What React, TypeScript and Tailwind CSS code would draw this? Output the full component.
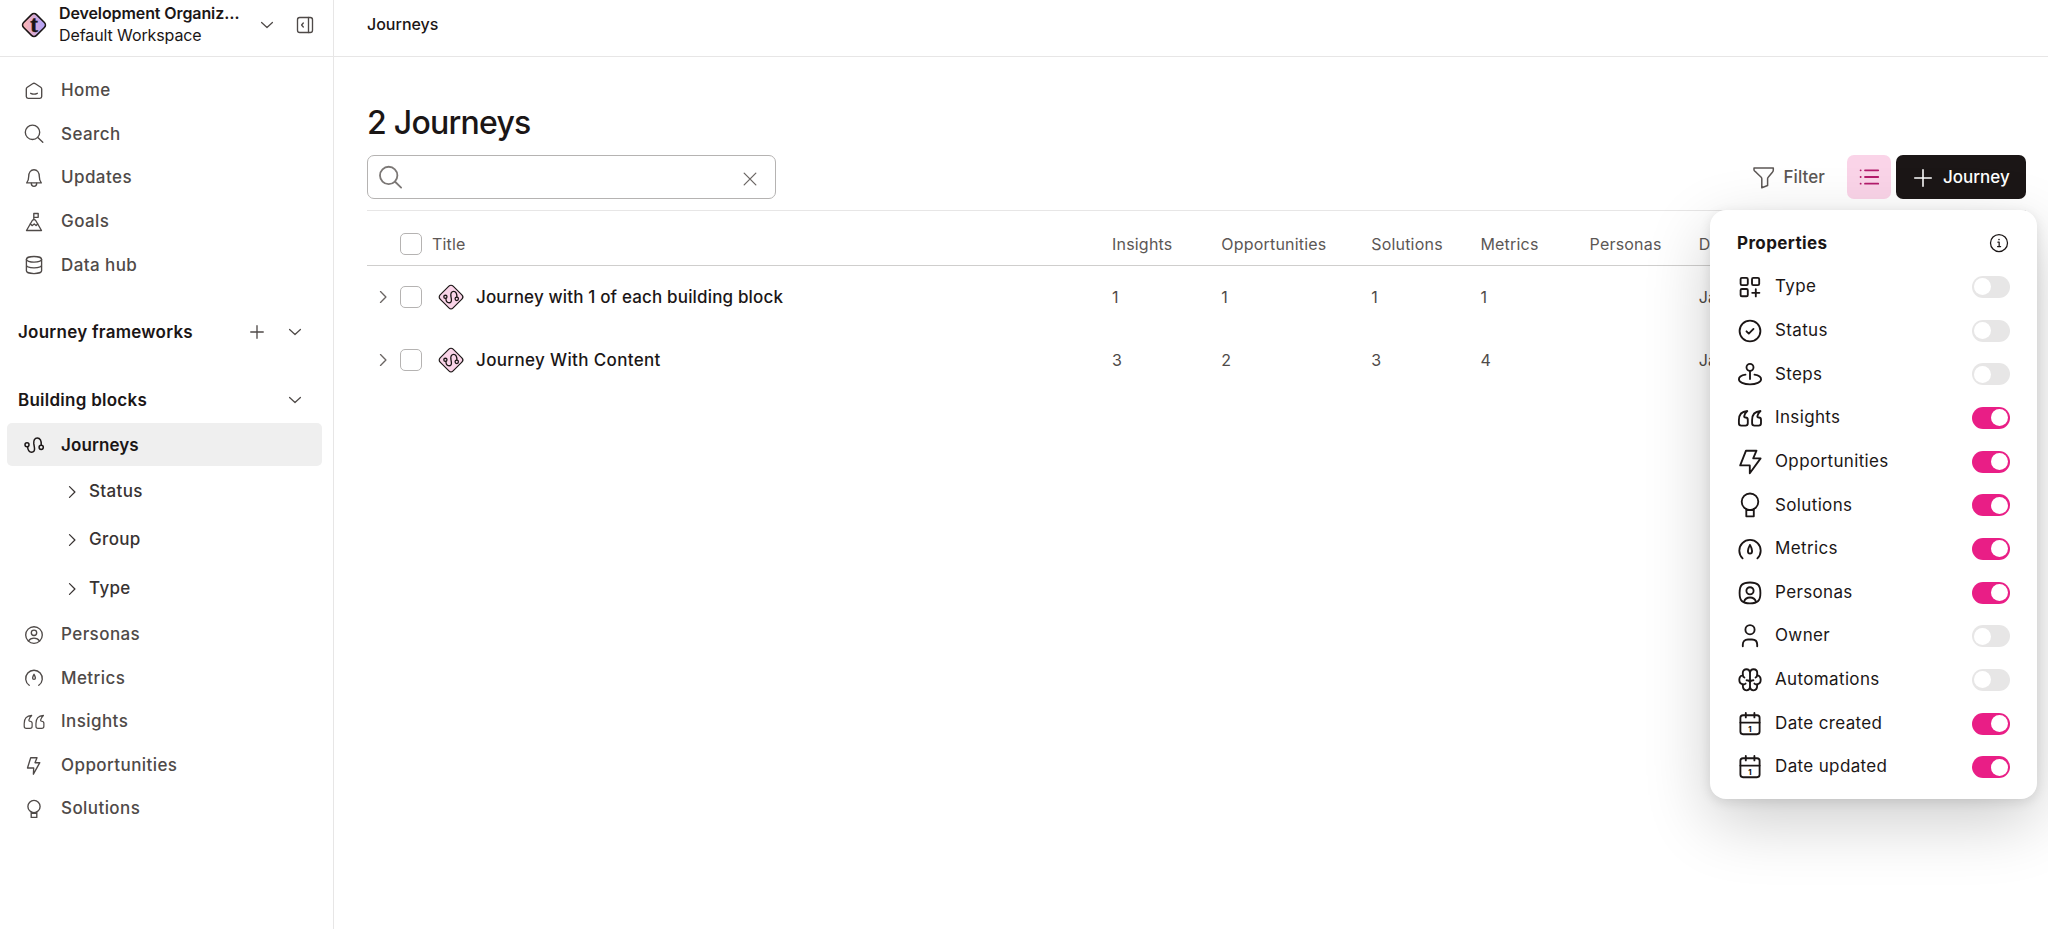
import type { ReactNode } from 'react'
import clsx from 'clsx'

interface IconProps {
  children: ReactNode
  className?: string
  stroke?: number
}

function Icon({ children, className = 'w-6 h-6', stroke = 1.35 }: IconProps) {
  return (
    <svg
      className={clsx('shrink-0 overflow-visible', className)}
      viewBox="0 0 24 24"
      fill="none"
      stroke="currentColor"
      strokeWidth={stroke}
      strokeLinecap="round"
      strokeLinejoin="round"
    >
      {children}
    </svg>
  )
}

const journeyShape = (
  <>
    <circle cx="5" cy="11.8" r="2" />
    <circle cx="19.2" cy="14.3" r="2.1" />
    <path d="M5.6 13.8c.2 3.3 1.8 5.4 4 5.4 2.3 0 3.2-1.6 2.9-4.2l-.7-4.3c-.4-3.4.9-5.8 3.5-5.8 2.7 0 4.3 2.6 4 7.3" />
  </>
)

const quoteShape = (
  <>
    <path d="M9.3 5C4 5.4.9 8.9.9 14v3.2c0 1.5 1 2.4 2.4 2.4h4.1c1.4 0 2.4-.9 2.4-2.4v-3.3c0-1.5-.9-2.4-2.3-2.4-1 0-1.5-.5-1.3-1.4.4-1.9 1.4-3.6 3.1-5.1z" />
    <path d="M22.5 5c-5.3.4-8.4 3.9-8.4 9v3.2c0 1.5 1 2.4 2.4 2.4h4.1c1.4 0 2.4-.9 2.4-2.4v-3.3c0-1.5-.9-2.4-2.3-2.4-1 0-1.5-.5-1.3-1.4.4-1.9 1.4-3.6 3.1-5.1z" />
  </>
)

const searchShape = (
  <>
    <circle cx="10.5" cy="10.3" r="7.2" />
    <path d="M15.8 15.5l5 4.8" />
  </>
)

const plusShape = <path d="M12 4.5v15M4.5 12h15" />
const chevronDown = <path d="M5.5 9l6.5 6 6.5-6" />
const chevronRight = <path d="M9 5.5l6.5 6.5L9 18.5" />

const calendarShape = (
  <>
    <rect x="2.4" y="3.2" width="19.2" height="19" rx="2.6" />
    <path d="M2.4 10.6h19.2M7.8 1v4.4M16.4 1v4.4" />
    <text x="12" y="19.6" textAnchor="middle" fontSize="7.5" fontWeight="800" fill="currentColor" stroke="none">
      1
    </text>
  </>
)

const mainNav = [
  {
    label: 'Home',
    shape: (
      <>
        <path d="M4.3 10.1c0-.8.4-1.5 1-1.9l5.3-3.5c.9-.6 1.9-.6 2.8 0l5.3 3.5c.6.4 1 1.1 1 1.9v7.5c0 1-.8 1.8-1.8 1.8H6.1c-1 0-1.8-.8-1.8-1.8z" />
        <path d="M8.7 14.3c1.9.9 4.7.9 6.6 0" />
      </>
    ),
  },
  { label: 'Search', shape: searchShape },
  {
    label: 'Updates',
    shape: (
      <>
        <path d="M4.7 16.9c1.5-1.9 2-3.5 2-6.4C6.7 6.6 8.8 3.7 12 3.7s5.3 2.9 5.3 6.8c0 2.9.5 4.5 2 6.4z" />
        <path d="M9.3 17.2c0 1.9 1 3.1 2.7 3.1s2.7-1.2 2.7-3.1" />
      </>
    ),
  },
  {
    label: 'Goals',
    shape: (
      <>
        <path d="M4.5 20.5l5.8-10c.7-1.2 2.7-1.2 3.4 0l5.8 10z" />
        <path d="M8.3 14l2 1.6 1.9-1.6 1.9 1.6 1.6-1.6M11.8 9.5v-6h4.4v3.8h-4.4" />
      </>
    ),
  },
  {
    label: 'Data hub',
    shape: (
      <>
        <ellipse cx="12" cy="6.3" rx="7.6" ry="2.8" />
        <path d="M4.4 6.3v11.4c0 1.6 3.4 2.9 7.6 2.9s7.6-1.3 7.6-2.9V6.3M4.4 12c0 1.6 3.4 2.8 7.6 2.8s7.6-1.2 7.6-2.8" />
      </>
    ),
  },
]

const blockNav = [
  {
    label: 'Personas',
    shape: (
      <>
        <circle cx="12" cy="12" r="8.3" />
        <circle cx="12" cy="9.8" r="2.7" />
        <path d="M6.5 18c1.1-1.9 3.1-2.9 5.5-2.9s4.4 1 5.5 2.9" />
      </>
    ),
  },
  {
    label: 'Metrics',
    shape: (
      <>
        <path d="M7.2 19.3a8.3 8.3 0 1 1 9.6 0" />
        <path d="M12 8.3c-.9 1.5-1.4 2.7-1.4 3.6a1.4 1.4 0 0 0 2.8 0c0-.9-.5-2.1-1.4-3.6z" />
      </>
    ),
  },
  { label: 'Insights', shape: <g transform="translate(1.4 1) scale(.89)">{quoteShape}</g> },
  {
    label: 'Opportunities',
    shape: <path d="M8.7 3.7H15l-2 5h4.8l-6.4 11.5.3-6.2H5.5z" />,
  },
  {
    label: 'Solutions',
    shape: (
      <>
        <circle cx="12" cy="9.5" r="6.1" />
        <path d="M9.2 15v5.4h5.6V15M9.2 16.2h5.6" />
      </>
    ),
  },
]

const properties = [
  {
    label: 'Type',
    on: false,
    shape: (
      <>
        <rect x="2.6" y="2.9" width="7.2" height="7.2" rx="1.3" />
        <rect x="14" y="2.9" width="7.2" height="7.2" rx="1.3" />
        <rect x="2.6" y="14" width="7.2" height="7.2" rx="1.3" />
        <path d="M17.8 14.2v7.2M14.2 17.8h7.2" />
      </>
    ),
  },
  {
    label: 'Status',
    on: false,
    shape: (
      <>
        <circle cx="12" cy="12" r="10.4" />
        <path d="M8.5 12.3l2.3 2.3 4.7-4.7" />
      </>
    ),
  },
  {
    label: 'Steps',
    on: false,
    shape: (
      <>
        <circle cx="12" cy="5.3" r="3.5" />
        <path d="M12 8.8v8.3M7.5 12.7C3.4 13.4.9 15.1.9 17.3c0 2.9 4.9 5.1 11.1 5.1s11.1-2.2 11.1-5.1c0-2.2-2.5-3.9-6.6-4.6" />
      </>
    ),
  },
  { label: 'Insights', on: true, shape: quoteShape },
  {
    label: 'Opportunities',
    on: true,
    shape: <path d="M8 .7h10.5l-3.3 7.7h7.4L11.8 23.3v-7.9H2.2z" />,
  },
  {
    label: 'Solutions',
    on: true,
    shape: (
      <>
        <circle cx="12" cy="8.8" r="8.3" />
        <path d="M8.3 16.2v7.1h7.5v-7.1M8.3 17h7.5" />
      </>
    ),
  },
  {
    label: 'Metrics',
    on: true,
    shape: (
      <>
        <path d="M4.6 21.3a10.7 10.7 0 1 1 14.8 0" />
        <path d="M12 7.9c-1.4 2.5-2.1 4.5-2.1 6.1a2.1 2.6 0 0 0 4.2 0c0-1.6-.7-3.6-2.1-6.1z" />
      </>
    ),
  },
  {
    label: 'Personas',
    on: true,
    shape: (
      <>
        <path d="M12 1.5c7.8 0 10.4 2.6 10.4 10.4S19.8 22.3 12 22.3 1.6 19.7 1.6 11.9 4.2 1.5 12 1.5z" />
        <circle cx="12" cy="9.8" r="3.6" />
        <path d="M6 20.8c.8-2.7 3-4.3 6-4.3s5.2 1.6 6 4.3" />
      </>
    ),
  },
  {
    label: 'Owner',
    on: false,
    shape: (
      <>
        <circle cx="12" cy="5.7" r="4.6" />
        <path d="M4.8 22.3v-1.5c0-3.4 1.9-5.3 5.2-5.3h4c3.3 0 5.2 1.9 5.2 5.3v1.5" />
      </>
    ),
  },
  {
    label: 'Automations',
    on: false,
    shape: (
      <>
        <path d="M12 4.3v15.5M12 4.3c-.4-2.1-1.7-3.1-3.5-3.1-2.2 0-3.7 1.5-3.7 3.6v2.3c-2.2.6-3.5 2.4-3.5 4.7s1.3 4.1 3.5 4.6v.9c0 3 1.3 5 3.6 5 2 0 3.3-1 3.6-2.9" />
        <path d="M12 4.3c.4-2.1 1.7-3.1 3.5-3.1 2.2 0 3.7 1.5 3.7 3.6v2.3c2.2.6 3.5 2.4 3.5 4.7s-1.3 4.1-3.5 4.6v.9c0 3-1.3 5-3.6 5-2 0-3.3-1-3.6-2.9" />
        <path d="M4.8 7.1c.1 1.1.6 1.9 1.6 2.4M19.2 7.1c-.1 1.1-.6 1.9-1.6 2.4M4.8 16.4c1.1.2 2.1-.1 2.8-.8M19.2 16.4c-1.1.2-2.1-.1-2.8-.8M8.6 12.2c1.6 0 2.8.6 3.4 1.9.6-1.3 1.8-1.9 3.4-1.9" />
      </>
    ),
  },
  { label: 'Date created', on: true, shape: calendarShape },
  { label: 'Date updated', on: true, shape: calendarShape },
]

const columns = ['Insights', 'Opportunities', 'Solutions', 'Metrics', 'Personas', 'Date created']

const journeys = [
  { title: 'Journey with 1 of each building block', tracking: 'tracking-[0.16px]', cells: ['1', '1', '1', '1', '', 'Jan 12'] },
  { title: 'Journey With Content', tracking: 'tracking-[0.35px]', cells: ['3', '2', '3', '4', '', 'Jan 12'] },
]

function NavItem({ label, shape }: { label: string; shape: ReactNode }) {
  return (
    <a className="flex items-center h-[43.67px] pl-[22px] gap-[15px] text-[17px] font-[450] tracking-[0.42px] text-[#4f4a48]">
      <Icon>{shape}</Icon>
      {label}
    </a>
  )
}

function Checkbox() {
  return <span className="w-[22px] h-[22px] shrink-0 rounded-[5px] border-[1.5px] border-[#b5b3b2] bg-white" />
}

function Toggle({ on }: { on: boolean }) {
  return (
    <span
      className={clsx(
        'flex items-center w-[38px] h-[22px] px-[2px] rounded-full',
        on ? 'justify-end bg-[#e91e86]' : 'justify-start bg-[#e7e6e6]',
      )}
    >
      <span className="w-[17px] h-[17px] rounded-full bg-white" />
    </span>
  )
}

function Sidebar() {
  return (
    <aside className="w-[334px] shrink-0 border-r border-[#e7e6e6]">
      <div className="flex items-center h-[57px] pl-5 pb-[7px] border-b border-[#e7e6e6]">
        <svg className="w-7 h-7 shrink-0" viewBox="0 0 28 28">
          <defs>
            <linearGradient id="brand" x1="0" y1="1" x2="1" y2="0">
              <stop offset="0.2" stopColor="#f7b3bb" />
              <stop offset="0.8" stopColor="#b9a5f3" />
            </linearGradient>
          </defs>
          <rect x="4.9" y="4.9" width="18.2" height="18.2" rx="3.5" transform="rotate(45 14 14)" fill="url(#brand)" stroke="#1b1616" strokeWidth="1.6" />
          <text x="14" y="20.8" textAnchor="middle" fontSize="23" fontWeight="700" fill="#1b1616" stroke="#1b1616" strokeWidth="0.5" fontFamily="Liberation Serif, serif">
            t
          </text>
        </svg>
        <div className="ml-[11px] w-[201px] whitespace-nowrap text-[16px] leading-[21.5px] text-[#1b1616]">
          <div className="font-semibold tracking-[-0.1px]">Development Organiz…</div>
          <div className="tracking-[-0.1px]">Default Workspace</div>
        </div>
        <Icon className="w-5 h-5 ml-[-3px] text-[#4f4a48]" stroke={1.5}>{chevronDown}</Icon>
        <Icon className="w-6 h-6 ml-4 text-[#4f4a48]">
          <rect x="4.5" y="4.5" width="15" height="15" rx="2.2" />
          <path d="M15.5 4.5v15M10.3 10l-1.7 2 1.7 2" />
        </Icon>
      </div>

      <nav className="pt-3">
        {mainNav.map((item) => (
          <NavItem key={item.label} {...item} />
        ))}
      </nav>

      <div className="flex items-center h-11 mt-[23px] pl-[18px] pr-7 text-[17px] font-semibold text-[#1b1616]">
        <span className="flex-1 tracking-[0.25px]">Journey frameworks</span>
        <Icon className="w-5 h-5 mr-[18px] text-[#4f4a48]" stroke={1.6}>{plusShape}</Icon>
        <Icon className="w-5 h-5 text-[#4f4a48]" stroke={1.5}>{chevronDown}</Icon>
      </div>
      <div className="flex items-center h-11 mt-6 pl-[18px] pr-7 text-[17px] font-semibold text-[#1b1616]">
        <span className="flex-1 tracking-[0.25px]">Building blocks</span>
        <Icon className="w-5 h-5 text-[#4f4a48]" stroke={1.5}>{chevronDown}</Icon>
      </div>

      <a className="flex items-center h-[43px] ml-[7px] mr-[11px] mt-px pt-px pl-[15px] gap-[15px] rounded-[5px] bg-[#efefef] text-[17px] font-semibold tracking-[0.1px] text-[#1b1616]">
        <Icon stroke={1.5}>{journeyShape}</Icon>
        Journeys
      </a>
      <div className="pt-px">
        {['Status', 'Group', 'Type'].map((label) => (
          <a key={label} className="flex items-center h-[48.5px] pl-[62px] gap-[7px] text-[17px] font-[450] tracking-[0.35px] text-[#383332]">
            <Icon className="w-5 h-5" stroke={1.5}>{chevronRight}</Icon>
            {label}
          </a>
        ))}
      </div>
      <nav>
        {blockNav.map((item) => (
          <NavItem key={item.label} {...item} />
        ))}
      </nav>
    </aside>
  )
}

function Toolbar() {
  return (
    <div className="flex items-center h-11">
      <div className="flex items-center justify-between w-[409px] h-11 pl-2 pr-[15px] rounded-[7px] border-[1.5px] border-[#b5b3b2]">
        <Icon className="w-[29px] h-[29px] text-[#7b7775]" stroke={1.5}>{searchShape}</Icon>
        <Icon className="w-5 h-5 mt-[3px] text-[#6a6563]" stroke={1.5}>
          <path d="M5 5l14 14M19 5L5 19" />
        </Icon>
      </div>
      <div className="flex items-center ml-auto mr-[22px] pt-px gap-[7px] text-[17px] font-[450] tracking-[0.1px] text-[#5c5755]">
        <Icon className="w-6 h-6" stroke={1.5}>
          <path d="M2 2h19.300v2c0 .9-.3 1.600-.9 2.200l-4.200 5c-.4.400-.6.900-.6 1.500v6.800l-5.800 2.200v-9c0-.6-.2-1.100-.6-1.500l-5.200-5c-.6-.6-2-1.300-2-2.200z" />
        </Icon>
        Filter
      </div>
      <button className="flex items-center justify-center w-11 h-11 rounded-[7px] bg-[#fad4e8] text-[#b41c6c]">
        <Icon stroke={1.8}>
          <path d="M8 5.3h13.2M8 12h13.2M8 18.7h13.2M3.6 5.3h.1M3.6 12h.1M3.6 18.7h.1" />
        </Icon>
      </button>
      <button className="flex items-center w-[130px] h-11 ml-[5px] pt-px pl-4 gap-[9px] rounded-[7px] bg-[#1b1616] text-white text-[17px] font-medium">
        <Icon className="w-[22px] h-[22px]" stroke={1.7}>
          <path d="M12 3v18M3 12h18" />
        </Icon>
        Journey
      </button>
    </div>
  )
}

const gridCols = 'grid grid-cols-[745px_109.3px_149.9px_109.2px_109.2px_109.2px_11px] items-center'

function JourneyTable() {
  return (
    <div className="mt-[11px] border-t border-[#e7e6e6] whitespace-nowrap">
      <div className={clsx(gridCols, 'h-[55px] pt-[11px] border-b-[1.5px] border-[#cfcecd] text-[16px] tracking-[0.2px] text-[#5c5755]')}>
        <div className="flex items-center pl-[33px] gap-2.5">
          <Checkbox />
          Title
        </div>
        {columns.map((column) => (
          <div key={column} className="last:overflow-hidden">{column}</div>
        ))}
      </div>
      {journeys.map((journey) => (
        <div key={journey.title} className={clsx(gridCols, 'h-[62.8px] text-[16px] text-[#4f4a48]')}>
          <div className="flex items-center pl-1.5">
            <Icon className="w-5 h-5 text-[#6a6563]" stroke={1.6}>{chevronRight}</Icon>
            <span className="w-[7px]" />
            <Checkbox />
            <svg className="w-7 h-7 ml-[15px] overflow-visible" viewBox="0 0 28 28" fill="none" stroke="#1b1616">
              <rect x="4.8" y="4.8" width="18.4" height="18.4" rx="3" transform="rotate(45 14 14)" fill="#fad4e8" strokeWidth="1.2" />
              <g transform="translate(4.4 4.4) scale(.8)" strokeWidth="1.6" strokeLinecap="round">
                {journeyShape}
              </g>
            </svg>
            <span className={clsx('ml-[11px] pt-px text-[17px] font-[480] text-[#1b1616]', journey.tracking)}>{journey.title}</span>
          </div>
          {journey.cells.map((cell, i) => (
            <div key={i} className="last:overflow-hidden">{cell}</div>
          ))}
        </div>
      ))}
    </div>
  )
}

function PropertiesPanel() {
  return (
    <div className="absolute left-[1710px] top-[210px] w-[327px] h-[589px] pt-[11.5px] px-[27px] rounded-2xl bg-white text-[#1b1616] shadow-[0_22px_66px_rgba(0,0,0,0.2),0_3px_12px_rgba(0,0,0,0.1)]">
      <div className="flex items-center justify-between h-[43.67px] pr-px text-[17px] font-bold tracking-[0.4px]">
        Properties
        <Icon className="w-5 h-5" stroke={1.5}>
          <circle cx="12" cy="12" r="10.2" />
          <path d="M10.7 11h1.5v5.3M10.3 16.3h3.6" />
          <path d="M12 7.8v.1" strokeWidth="2" />
        </Icon>
      </div>
      {properties.map((item) => (
        <div key={item.label} className="flex items-center h-[43.67px] pl-px text-[17px] tracking-[0.36px]">
          <Icon stroke={1.85}>{item.shape}</Icon>
          <span className="flex-1 ml-[13px]">{item.label}</span>
          <Toggle on={item.on} />
        </div>
      ))}
    </div>
  )
}

export default function App() {
  return (
    <div className="relative flex w-[2048px] h-[929px] overflow-hidden bg-white font-['Inter',sans-serif]">
      <Sidebar />
      <main className="flex-1 min-w-0">
        <div className="flex items-center h-[57px] pl-[33px] pb-[9px] border-b border-[#e7e6e6] text-[16px] font-[450] text-[#1b1616]">
          Journeys
        </div>
        <div className="pl-[33px] pr-[22px] pt-11">
          <h1 className="mb-2.5 text-[32px] leading-[44px] font-[450] tracking-[-0.75px] text-[#1b1616]">2 Journeys</h1>
          <Toolbar />
          <JourneyTable />
        </div>
      </main>
      <PropertiesPanel />
    </div>
  )
}
